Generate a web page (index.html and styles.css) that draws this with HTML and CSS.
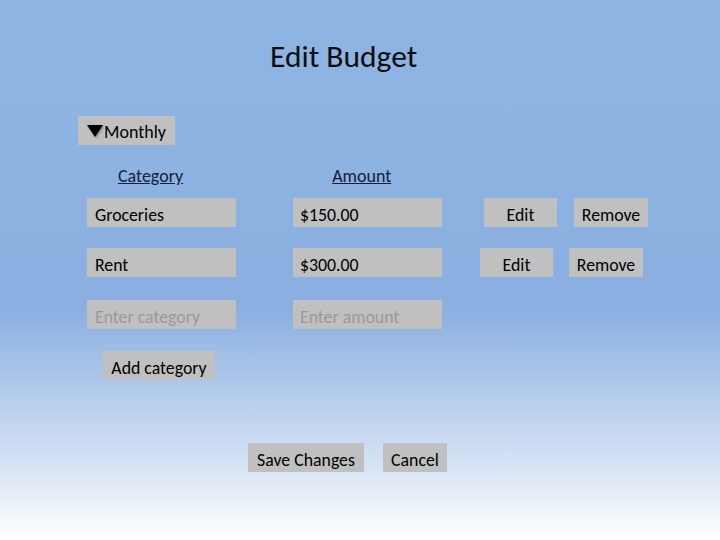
FILE: index.html
```html
<!DOCTYPE html>
<html>
<head>
<meta charset="utf-8">
<link rel="stylesheet" href="styles.css">
</head>
<body>
<div class="slide">
  <h1 class="title">Edit Budget</h1>
  <div class="period"><span class="tri"></span>Monthly</div>
  <div class="headers">
    <span class="head head-cat">Category</span>
    <span class="head head-amt">Amount</span>
  </div>
  <div class="row">
    <div class="field cat">Groceries</div>
    <div class="field amt">$150.00</div>
    <div class="btn edit">Edit</div>
    <div class="btn remove">Remove</div>
  </div>
  <div class="row row2">
    <div class="field cat">Rent</div>
    <div class="field amt">$300.00</div>
    <div class="btn edit">Edit</div>
    <div class="btn remove">Remove</div>
  </div>
  <div class="row row3">
    <div class="field cat ph">Enter category</div>
    <div class="field amt ph">Enter amount</div>
  </div>
  <div class="add">Add category</div>
  <div class="footer">
    <div class="btn save">Save Changes</div>
    <div class="btn cancel">Cancel</div>
  </div>
</div>
</body>
</html>
```

FILE: styles.css
```css
html, body {
  margin: 0;
  padding: 0;
}
body {
  width: 720px;
  height: 540px;
  overflow: hidden;
  background: linear-gradient(180deg, #8eb4e3 0%, #8db3e2 30%, #8aafe0 57%, #d3e1f4 85%, #ffffff 100%);
  font-family: "Carlito", "Lato", sans-serif;
  color: #000;
}
.slide {
  display: flex;
  flex-direction: column;
  align-items: flex-start;
  height: 540px;
}
.title {
  margin: 37px 0 0 270px;
  font-weight: normal;
  font-size: 31.5px;
  line-height: 38px;
  color: #0d0d0d;
}
.period {
  margin: 41px 0 0 78px;
  height: 29px;
  width: 97px;
  background: #c0c0c0;
  display: flex;
  align-items: center;
  font-size: 18px;
  box-sizing: border-box;
  padding-left: 9px;
  padding-top: 3px;
}
.tri {
  width: 0;
  height: 0;
  border-left: 8.5px solid transparent;
  border-right: 8.5px solid transparent;
  border-top: 12px solid #000;
  margin-right: 1px;
  margin-bottom: 2px;
  filter: drop-shadow(1px 1px 1px rgba(0,0,0,0.35));
}
.headers {
  margin-top: 21px;
  display: flex;
  height: 20px;
  align-items: center;
  font-size: 18px;
}
.head {
  text-decoration: underline;
  color: #15203a;
}
.head-cat { margin-left: 118px; }
.head-amt { margin-left: 149px; }
.row {
  display: flex;
  margin-top: 12px;
  height: 29px;
  align-items: stretch;
}
.row2 { margin-top: 21px; }
.row3 { margin-top: 23px; }
.field, .btn, .add {
  background: #c0c0c0;
  font-size: 17.8px;
  display: flex;
  align-items: center;
  box-sizing: border-box;
  padding-top: 4px;
}
.field {
  width: 149px;
  padding-left: 8px;
}
.cat { margin-left: 87px; }
.amt { margin-left: 57px; padding-left: 7px; }
.ph { color: #9a9a9a; }
.btn { justify-content: center; }
.edit { width: 73px; margin-left: 42px; }
.remove { width: 74px; margin-left: 17px; }
.row2 .edit { margin-left: 38px; }
.row2 .remove { margin-left: 16px; }
.add {
  margin: 22px 0 0 103px;
  height: 29px;
  width: 112px;
  justify-content: center;
}
.footer {
  display: flex;
  margin: 63px 0 0 248px;
  height: 29px;
}
.save { width: 116px; }
.cancel { width: 64px; margin-left: 19px; }
```
